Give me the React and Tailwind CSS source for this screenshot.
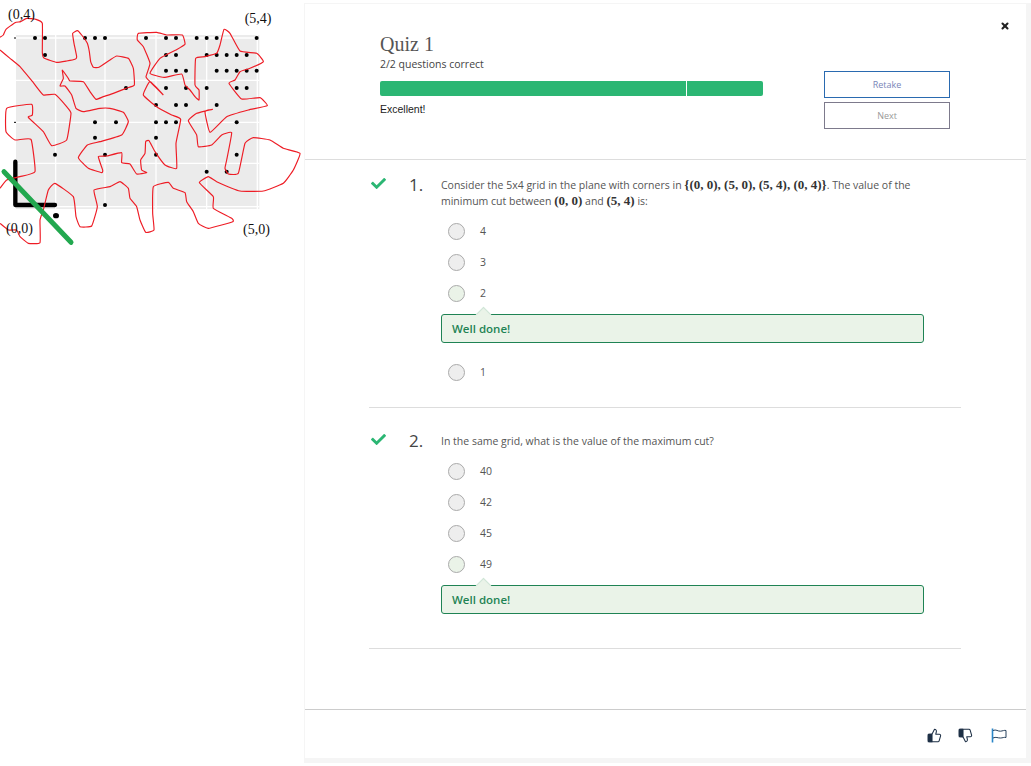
import React from 'react';
import { X } from 'lucide-react';
import { FaCheck } from 'react-icons/fa';

const dots = [
    [114, [105, 135, 255, 285, 315, 438, 498, 528, 590, 620, 650, 770]],
    [165, [135, 498, 528, 620, 650, 680, 710, 740]],
    [212, [498, 528, 558, 650, 680, 710, 740, 770]],
    [264, [378, 498, 558, 620, 710, 740]],
    [315, [468, 528, 558, 650]],
    [367, [285, 348, 468, 498, 528, 710]],
    [413, [285, 468]],
    [464, [165, 315, 468, 710]],
    [515, [620, 680]],
    [615, [315]],
];

const cutPath = "0,112 10,105 18,88 45,68 62,65 80,55 108,58 127,70 127,158 133,175 170,187 200,183 225,178 230,170 222,130 218,100 232,92 245,105 262,130 268,155 272,185 280,202 297,202 330,180 350,168 385,175 400,205 403,255 378,265 340,280 310,290 288,298 270,275 250,245 210,243 205,235 187,210 190,235 180,258 195,258 215,285 228,325 250,335 300,325 330,325 370,337 385,365 365,405 300,425 262,435 235,473 265,505 305,518 308,510 295,470 320,468 365,458 365,488 390,492 410,522 440,518 425,510 422,480 435,460 437,425 447,422 465,455 495,495 530,505 528,430 542,358 515,345 470,320 430,285 450,245 490,285 450,245 438,230 450,190 430,140 412,120 415,100 470,97 500,105 547,105 555,133 528,150 480,175 450,220 492,232 545,222 555,255 570,270 585,290 597,300 597,270 585,255 587,175 615,170 650,160 660,135 672,88 690,100 720,153 770,160 790,185 750,205 720,215 705,240 687,250 725,297 780,293 802,317 745,330 680,350 630,397 615,335 637,328 590,340 565,362 590,405 595,440 635,435 665,405 695,398 680,480 675,505 685,522 715,520 735,430 760,413 810,420 850,445 900,460 880,510 850,550 790,573 720,573 650,545 625,530 598,548 640,590 640,625 695,655 698,665 625,685 595,670 580,635 560,605 555,578 520,565 505,547 460,560 458,640 462,690 437,697 420,660 410,620 390,595 385,565 360,545 330,560 282,570 292,620 275,678 240,680 228,650 220,590 165,550 145,570 130,630 120,660 120,728 85,730 60,710 50,690 25,690 0,670";
const cutPath2 = "0,150 30,175 60,200 100,248 130,285 165,283 200,320 213,340 200,420 155,437 130,395 85,352 97,345 95,313 20,325 18,395 45,420 93,418 105,515 60,530 20,540 0,565";

// rounds the hand drawn cut only slightly, the reference is fairly angular
function smooth(points) {
    const p = points.split(' ').map((s) => s.split(',').map(Number));
    let d = `M${p[0][0]} ${p[0][1]}`;
    for (let i = 0; i < p.length - 1; i++) {
        const a = p[Math.max(i - 1, 0)];
        const b = p[i];
        const c = p[i + 1];
        const e = p[Math.min(i + 2, p.length - 1)];
        d += `C${b[0] + (c[0] - a[0]) / 16} ${b[1] + (c[1] - a[1]) / 16} ${c[0] - (e[0] - b[0]) / 16} ${c[1] - (e[1] - b[1]) / 16} ${c[0]} ${c[1]}`;
    }
    return d;
}

function GridPlot() {
    return (
        <svg width="305" height="250" viewBox="0 0 915 750" className="block">
            <rect x="48" y="105" width="730" height="522" fill="#ebebeb" />
            {[167, 315, 468, 620, 772].map((x) => (
                <line key={x} x1={x} y1="105" x2={x} y2="627" stroke="#fff" strokeWidth="4" />
            ))}
            {[114, 241, 367, 490, 620].map((y) => (
                <line key={y} x1="48" y1={y} x2="778" y2={y} stroke="#fff" strokeWidth="4" />
            ))}
            <line x1="42" y1="114" x2="48" y2="114" stroke="#000" strokeWidth="3" />
            <line x1="42" y1="367" x2="48" y2="367" stroke="#000" strokeWidth="3" />
            {dots.map(([y, xs]) => xs.map((x) => <circle key={`${x}-${y}`} cx={x} cy={y} r="6" fill="#000" />))}
            <ellipse cx="168" cy="647" rx="9" ry="8" fill="#000" />
            <path d="M46 485V615H165" fill="none" stroke="#000" strokeWidth="13" strokeLinejoin="round" strokeLinecap="round" />
            <path d={smooth(cutPath)} fill="none" stroke="#ee1c25" strokeWidth="3.5" />
            <path d={smooth(cutPath2)} fill="none" stroke="#ee1c25" strokeWidth="3.5" />
            <line x1="12" y1="515" x2="213" y2="727" stroke="#22a84f" strokeWidth="15" strokeLinecap="round" />
            <text x="24" y="58" fontSize="42" fontFamily="Liberation Serif" fill="#111">(0,4)</text>
            <text x="734" y="70" fontSize="42" fontFamily="Liberation Serif" fill="#111">(5,4)</text>
            <text x="18" y="698" fontSize="42" fontFamily="Liberation Serif" fill="#111">(0,0)</text>
            <text x="729" y="703" fontSize="42" fontFamily="Liberation Serif" fill="#111">(5,0)</text>
        </svg>
    );
}

function Thumb({ down }) {
    return (
        <svg width="15" height="15" viewBox="0 0 24 24" fill="none" stroke="#1d2f45" strokeWidth="1.7" strokeLinejoin="round" className={down ? '-scale-y-100' : ''}>
            <rect x="2" y="10" width="6" height="12" fill="#1d2f45" />
            <path d="M15 5.88 14 10h5.83a2 2 0 0 1 1.92 2.56l-2.33 8A2 2 0 0 1 17.5 22H4a2 2 0 0 1-2-2v-8a2 2 0 0 1 2-2h2.76a2 2 0 0 0 1.79-1.11L12 2a3.13 3.13 0 0 1 3 3.88Z" />
        </svg>
    );
}

function FlagIcon() {
    return (
        <svg width="16" height="15" viewBox="0 0 16 15" fill="none" className="ml-[2px]">
            <path d="M1.5 0.5V14.5" stroke="#2a86c8" strokeWidth="1.6" />
            <path d="M2 2.5C5 1 7 3.5 9.5 3.2C11.5 3 13.5 2 15 2.5V9.5C13 9 11.5 10 9.5 10C7 10.2 5 8.5 2 10" stroke="#27405c" strokeWidth="1" />
        </svg>
    );
}

function Tex({ children }) {
    return <span className="inline-block leading-[14px] font-['Liberation_Serif'] font-bold text-[13px] text-[#333]">{children}</span>;
}

function Option({ label, picked }) {
    return (
        <div className="flex items-center h-[31px] pl-[7px]">
            <span className={`w-[17px] h-[17px] rounded-full border border-[#aaa] ${picked ? 'bg-[#eaf3e8]' : 'bg-[#eee]'}`} />
            <span className="ml-[15px] text-[10.5px] text-[#555]">{label}</span>
        </div>
    );
}

function WellDone() {
    return (
        <div className="relative mt-[5px] h-[29px] w-[483px] border border-[#1f8354] rounded-[3px] bg-[#eaf3e8] flex items-center pl-[10px] text-[11.5px] font-semibold text-[#1f8354]">
            <span className="absolute -top-[6px] left-[36px] w-[11px] h-[11px] rotate-45 bg-[#eaf3e8] border-t border-l border-[#cfe5d6]" />
            Well done!
        </div>
    );
}

function Question({ num, children }) {
    return (
        <div className="flex">
            <FaCheck className="mt-[-1px] ml-[2px] text-[#2bb673]" size={15} />
            <div className="ml-[23px] w-[32px] -mt-[2px] text-[17px] leading-[20px] text-[#444]">{num}.</div>
            <div className="w-[483px]">{children}</div>
        </div>
    );
}

export default function App() {
    return (
        <div className="relative h-[766px] w-[1031px] flex bg-white font-['Open_Sans'] text-[#555] overflow-hidden">
            <div className="w-[304px] shrink-0">
                <GridPlot />
            </div>
            <div className="mt-[3px] h-[760px] w-[727px] bg-[#f5f5f5] pl-[1px] pr-[5px] pb-[5px] pt-[1px]">
                <div className="relative h-full bg-white flex flex-col">
                    <X className="absolute top-[17px] right-[16px] text-[#222]" size={10} strokeWidth={5} />
                    <div className="h-[156px] border-b border-[#ddd] flex pl-[75px]">
                        <div className="w-[383px] pt-[27px]">
                            <h1 className="font-['Liberation_Serif'] text-[20px] leading-[26px] text-[#555]">Quiz 1</h1>
                            <p className="text-[10.5px] leading-[14px] text-[#444]">2/2 questions correct</p>
                            <div className="mt-[10px] h-[15px] rounded-[2px] bg-[#2bb673] flex">
                                <div className="w-[307px] border-r border-white" />
                            </div>
                            <p className="mt-[6px] font-['Liberation_Sans'] text-[10.5px] text-[#222]">Excellent!</p>
                        </div>
                        <div className="ml-[61px] pt-[67px] flex flex-col gap-[4px]">
                            <button className="w-[126px] h-[27px] border border-[#2a6ab0] text-[9px] text-[#7a86b8]">Retake</button>
                            <button className="w-[126px] h-[27px] border border-[#7d7a8c] text-[9px] text-[#999]">Next</button>
                        </div>
                    </div>
                    <div className="flex-1 pl-[64px] pt-[17px]">
                        <div className="w-[592px] h-[231px] border-b border-[#ddd]">
                            <Question num="1">
                                <p className="text-[10.5px] leading-[16px] text-[#555]">
                                    Consider the 5x4 grid in the plane with corners in <Tex>{'{(0, 0), (5, 0), (5, 4), (0, 4)}'}</Tex>. The value of the minimum cut between <Tex>(0, 0)</Tex> and <Tex>(5, 4)</Tex> is:
                                </p>
                                <div className="mt-[7px]">
                                    <Option label="4" />
                                    <Option label="3" />
                                    <Option label="2" picked />
                                    <WellDone />
                                    <div className="mt-[14px]"><Option label="1" /></div>
                                </div>
                            </Question>
                        </div>
                        <div className="w-[592px] h-[241px] border-b border-[#ddd] pt-[25px]">
                            <Question num="2">
                                <p className="text-[10.5px] leading-[16px] text-[#555]">In the same grid, what is the value of the maximum cut?</p>
                                <div className="mt-[7px]">
                                    <Option label="40" />
                                    <Option label="42" />
                                    <Option label="45" />
                                    <Option label="49" picked />
                                    <WellDone />
                                </div>
                            </Question>
                        </div>
                    </div>
                    <div className="h-[49px] border-t border-[#ccc] flex items-center justify-end gap-[16px] pr-[19px] pt-[2px]">
                        <Thumb />
                        <Thumb down />
                        <FlagIcon />
                    </div>
                </div>
            </div>
        </div>
    );
}
